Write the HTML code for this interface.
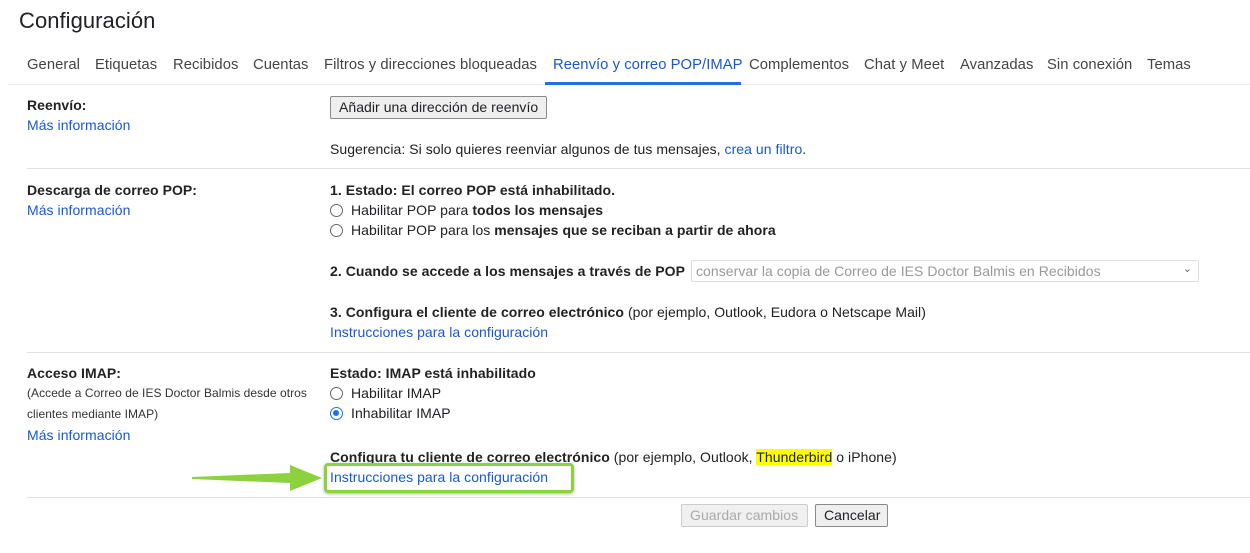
<!DOCTYPE html>
<html><head><meta charset="utf-8"><style>
body{margin:0;width:1250px;height:553px;background:#fff;font-family:"Liberation Sans",Arial,sans-serif;font-size:14px;color:#202124;position:relative;overflow:hidden;letter-spacing:0.05px}
.a{position:absolute;white-space:nowrap}
.l{color:#1a57d6}
b{font-weight:bold;color:#222}
.hr{position:absolute;left:27px;right:0;height:1px;background:#e0e0e0}
.tab{position:absolute;top:57px;font-size:14.8px;color:#444;white-space:nowrap}
.rad{display:inline-block;width:13px;height:13px;border:1px solid #666;border-radius:50%;vertical-align:-2px;margin-right:8px;box-sizing:border-box;position:relative}
.rad.on{border-color:#1a73e8;border-width:1.5px}
.rad.on:after{content:"";position:absolute;left:2px;top:2px;width:6px;height:6px;border-radius:50%;background:#1a73e8}
.btn{position:absolute;border:1px solid #8a8a8a;border-radius:2px;background:#efefef;font-size:14px;padding:2px 8px;box-sizing:border-box;white-space:nowrap}
.sm{font-size:12px;color:#333}
</style></head><body>
<div class="a" style="left:19px;top:8px;font-size:22px;color:#202124">Configuración</div>
<div class="tab" style="left:27px">General</div>
<div class="tab" style="left:95px">Etiquetas</div>
<div class="tab" style="left:173px">Recibidos</div>
<div class="tab" style="left:253px">Cuentas</div>
<div class="tab" style="left:324px">Filtros y direcciones bloqueadas</div>
<div class="tab" style="left:553px;color:#1a57d6">Reenvío y correo POP/IMAP</div>
<div class="tab" style="left:749px">Complementos</div>
<div class="tab" style="left:864px">Chat y Meet</div>
<div class="tab" style="left:960px">Avanzadas</div>
<div class="tab" style="left:1047px">Sin conexión</div>
<div class="tab" style="left:1147px">Temas</div>
<div style="position:absolute;left:8px;right:0;top:84px;height:1px;background:#e8eaed"></div>
<div style="position:absolute;left:545px;width:196px;top:82px;height:3px;background:#1a73e8"></div>

<div class="a" style="left:27px;top:97px"><b>Reenvío:</b></div>
<div class="a l" style="left:27px;top:117px">Más información</div>
<div class="btn" style="left:330px;top:96px;width:217px;height:23px;padding-top:2px">Añadir una dirección de reenvío</div>
<div class="a" style="left:330px;top:141px">Sugerencia: Si solo quieres reenviar algunos de tus mensajes, <span class="l">crea un filtro</span>.</div>
<div class="hr" style="top:168px"></div>

<div class="a" style="left:27px;top:182px"><b>Descarga de correo POP:</b></div>
<div class="a l" style="left:27px;top:202px">Más información</div>
<div class="a" style="left:330px;top:182px"><b>1. Estado: El correo POP está inhabilitado.</b></div>
<div class="a" style="left:330px;top:202px"><span class="rad"></span>Habilitar POP para <b>todos los mensajes</b></div>
<div class="a" style="left:330px;top:222px"><span class="rad"></span>Habilitar POP para los <b>mensajes que se reciban a partir de ahora</b></div>
<div class="a" style="left:330px;top:263px"><b>2. Cuando se accede a los mensajes a través de POP</b></div>
<div style="position:absolute;left:691px;top:260px;width:508px;height:22px;border:1px solid #ddd;border-radius:2px;box-sizing:border-box;color:#999;padding:2px 4px" class="a">conservar la copia de Correo de IES Doctor Balmis en Recibidos<span style="position:absolute;right:6px;top:1px;color:#666;font-size:11px">⌄</span></div>
<div class="a" style="left:330px;top:304px"><b>3. Configura el cliente de correo electrónico</b> (por ejemplo, Outlook, Eudora o Netscape Mail)</div>
<div class="a l" style="left:330px;top:324px">Instrucciones para la configuración</div>
<div class="hr" style="top:352px"></div>

<div class="a" style="left:27px;top:365px"><b>Acceso IMAP:</b></div>
<div class="a sm" style="left:27px;top:386px">(Accede a Correo de IES Doctor Balmis desde otros</div>
<div class="a sm" style="left:27px;top:407px">clientes mediante IMAP)</div>
<div class="a l" style="left:27px;top:427px">Más información</div>
<div class="a" style="left:330px;top:365px"><b>Estado: IMAP está inhabilitado</b></div>
<div class="a" style="left:330px;top:385px"><span class="rad"></span>Habilitar IMAP</div>
<div class="a" style="left:330px;top:405px"><span class="rad on"></span>Inhabilitar IMAP</div>
<div class="a" style="left:330px;top:449px"><b>Configura tu cliente de correo electrónico</b> (por ejemplo, Outlook, <span style="background:#ffff00">Thunderbird</span> o iPhone)</div>
<div class="a l" style="left:330px;top:469px">Instrucciones para la configuración</div>
<div style="position:absolute;left:324px;top:463px;width:250px;height:30px;border:3px solid #8cd13e;border-radius:4px;box-sizing:border-box;box-shadow:0 1px 3px rgba(0,0,0,.3)"></div>
<svg style="position:absolute;left:190px;top:464px" width="135" height="28"><polygon points="2,13 100,9 100,1 132,14 100,27 100,19 2,15" fill="#8cd13e"/></svg>
<div class="hr" style="top:497px"></div>
<div class="btn" style="left:681px;top:504px;width:127px;height:23px;color:#aaa;border-color:#ccc;background:#f0f0f0">Guardar cambios</div>
<div class="btn" style="left:815px;top:504px;width:73px;height:23px">Cancelar</div>
</body></html>
